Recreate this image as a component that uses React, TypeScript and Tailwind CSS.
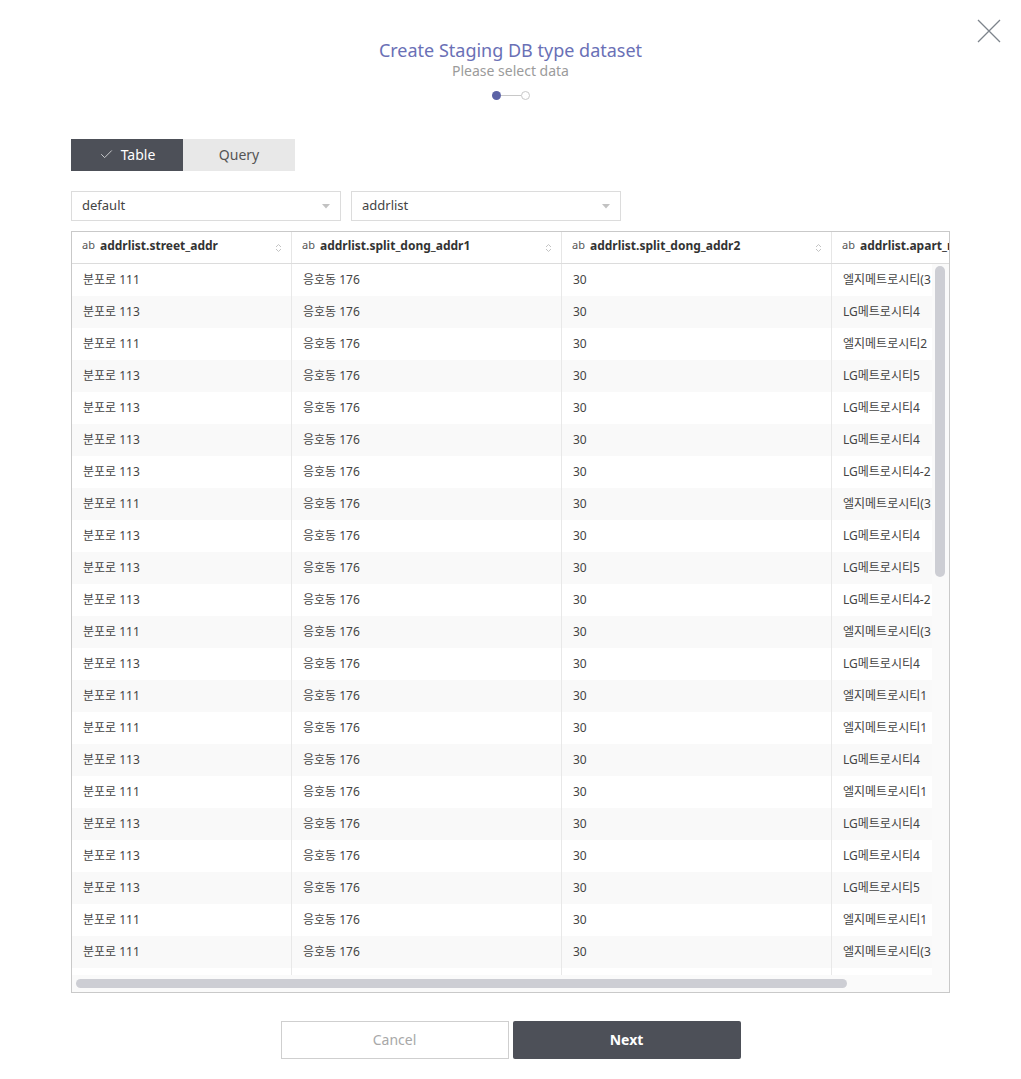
import { Check } from "lucide-react";

const rows: [string, string][] = [
  ["분포로 111", "엘지메트로시티(3"],
  ["분포로 113", "LG메트로시티4"],
  ["분포로 111", "엘지메트로시티2"],
  ["분포로 113", "LG메트로시티5"],
  ["분포로 113", "LG메트로시티4"],
  ["분포로 113", "LG메트로시티4"],
  ["분포로 113", "LG메트로시티4-2"],
  ["분포로 111", "엘지메트로시티(3"],
  ["분포로 113", "LG메트로시티4"],
  ["분포로 113", "LG메트로시티5"],
  ["분포로 113", "LG메트로시티4-2"],
  ["분포로 111", "엘지메트로시티(3"],
  ["분포로 113", "LG메트로시티4"],
  ["분포로 111", "엘지메트로시티1"],
  ["분포로 111", "엘지메트로시티1"],
  ["분포로 113", "LG메트로시티4"],
  ["분포로 111", "엘지메트로시티1"],
  ["분포로 113", "LG메트로시티4"],
  ["분포로 113", "LG메트로시티4"],
  ["분포로 113", "LG메트로시티5"],
  ["분포로 111", "엘지메트로시티1"],
  ["분포로 111", "엘지메트로시티(3"],
  ["분포로 113", "LG메트로시티4"],
];

const columns = [
  { name: "addrlist.street_addr", width: "w-[220px]" },
  { name: "addrlist.split_dong_addr1", width: "w-[270px]" },
  { name: "addrlist.split_dong_addr2", width: "w-[270px]" },
  { name: "addrlist.apart_name", width: "w-[220px]" },
];

function SortIcon() {
  return (
    <svg width="7" height="10" viewBox="0 0 7 10" className="shrink-0">
      <path d="M1 4 L3.5 1.5 L6 4" fill="none" stroke="#c4c4c4" strokeWidth="1" />
      <path d="M1 6 L3.5 8.5 L6 6" fill="none" stroke="#c4c4c4" strokeWidth="1" />
    </svg>
  );
}

function Select({ value }: { value: string }) {
  return (
    <div className="flex h-[30px] w-[270px] items-center justify-between border border-[#dcdcdc] bg-white pl-[10px] pr-[10px] text-[13px] text-[#444]">
      <span>{value}</span>
      <svg width="8" height="5" viewBox="0 0 8 5">
        <path d="M0 0 L8 0 L4 4.5 Z" fill="#c2c2c2" />
      </svg>
    </div>
  );
}

export default function App() {
  return (
    <div className="relative min-h-[1079px] w-full bg-white font-['Noto_Sans','Noto_Sans_CJK_KR',sans-serif]">
      <button className="absolute right-[20px] top-[19px] h-[24px] w-[24px]" aria-label="close">
        <svg width="24" height="24" viewBox="0 0 24 24">
          <path d="M1 1 L23 23 M23 1 L1 23" stroke="#7d848c" strokeWidth="1.3" />
        </svg>
      </button>

      <div className="flex flex-col items-center pt-[38px]">
        <h1 className="text-[18px] leading-[24px] text-[#6a70b6]">Create Staging DB type dataset</h1>
        <p className="text-[14px] leading-[18px] text-[#9b9b9b]">Please select data</p>
        <div className="mt-[11px] flex items-center">
          <span className="h-[9px] w-[9px] rounded-full bg-[#5c63a6]" />
          <span className="h-px w-[20px] bg-[#c8c8c8]" />
          <span className="h-[9px] w-[9px] rounded-full border-[1.5px] border-[#c8c8c8] bg-white" />
        </div>
      </div>

      <div className="px-[71px]">
        <div className="mt-[39px] flex">
          <button className="flex h-[32px] w-[112px] items-center justify-center gap-[7px] bg-[#4d5058] pb-[2px] text-[14px] text-white">
            <Check size={15} strokeWidth={1.4} className="text-[#d9dadc]" />
            Table
          </button>
          <button className="flex h-[32px] w-[112px] items-center justify-center bg-[#e8e8e8] pb-[2px] text-[14px] text-[#555]">
            Query
          </button>
        </div>

        <div className="mt-[20px] flex gap-[10px]">
          <Select value="default" />
          <Select value="addrlist" />
        </div>

        <div className="relative mt-[10px] flex h-[762px] flex-col overflow-hidden border border-[#c9c9c9]">
          <div className="flex h-[32px] shrink-0 border-b border-[#dcdcdc] bg-white">
            {columns.map((c) => (
              <div
                key={c.name}
                className={`${c.width} flex shrink-0 items-center justify-between border-r border-[#e6e6e6] pb-[4px] pl-[10px] pr-[9px]`}
              >
                <div className="flex items-center gap-[5px] whitespace-nowrap">
                  <span className="text-[11px] text-[#555]">ab</span>
                  <span className="text-[12px] font-bold text-[#333]">{c.name}</span>
                </div>
                <span className="pt-[4px]">
                  <SortIcon />
                </span>
              </div>
            ))}
          </div>

          <div className="flex min-h-0 flex-1">
            <div className="min-w-0 flex-1 overflow-hidden">
              {rows.map(([street, apart], i) => (
                <div
                  key={i}
                  className={`flex h-[32px] text-[12px] text-[#444] ${i % 2 === 1 ? "bg-[#f9f9f9]" : "bg-white"}`}
                >
                  <div className="flex w-[220px] shrink-0 items-center border-r border-[#e8e8e8] pl-[11px]">{street}</div>
                  <div className="flex w-[270px] shrink-0 items-center border-r border-[#e8e8e8] pl-[11px]">응호동 176</div>
                  <div className="flex w-[270px] shrink-0 items-center border-r border-[#e8e8e8] pl-[11px]">30</div>
                  <div className="flex w-[220px] shrink-0 items-center whitespace-nowrap pl-[11px]">{apart}</div>
                </div>
              ))}
            </div>
            <div className="w-[17px] shrink-0 bg-[#fafafa] pl-[3px] pt-[2px]">
              <div className="h-[311px] w-[10px] rounded-full bg-[#cdced4]" />
            </div>
          </div>

          <div className="flex h-[17px] shrink-0 items-center bg-[#fafafa] pl-[4px]">
            <div className="h-[9px] w-[771px] rounded-full bg-[#cdced4]" />
          </div>
        </div>

        <div className="mt-[28px] flex justify-center gap-[4px] pb-[20px]">
          <button className="h-[38px] w-[228px] border border-[#cfcfcf] bg-white pb-[2px] text-[14px] text-[#a8a8a8]">Cancel</button>
          <button className="h-[38px] w-[228px] rounded-[2px] bg-[#4d5058] pb-[2px] text-[14px] font-bold text-white">Next</button>
        </div>
      </div>
    </div>
  );
}
